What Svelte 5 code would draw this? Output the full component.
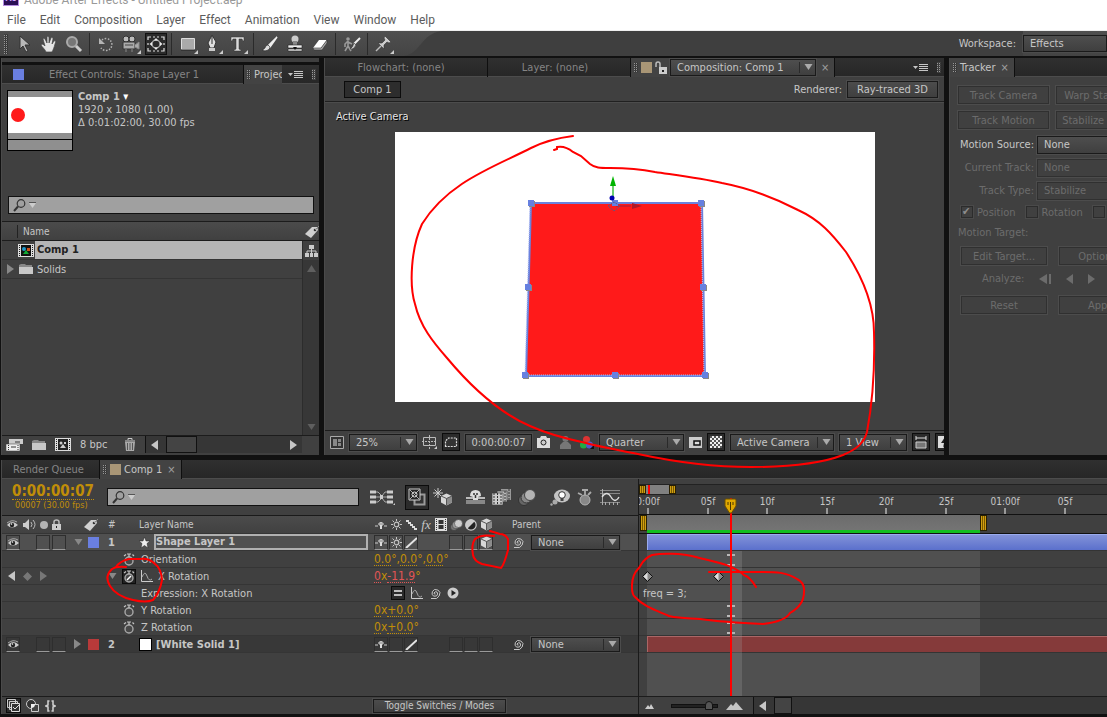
<script>
  let projectSearch = $state('');
  let layerSearch = $state('');
  let zoom = $state(90);

  const menus = ['File', 'Edit', 'Composition', 'Layer', 'Effect', 'Animation', 'View', 'Window', 'Help'];

  const tools = [
    ['select', 'hand', 'zoom'],
    ['rotate', 'camera', 'pan'],
    ['rect', 'pen', 'type'],
    ['brush', 'stamp', 'eraser'],
    ['roto'],
    ['pin']
  ];
  const withFlyout = ['camera', 'rect', 'pen', 'type', 'pin'];

  // pixels per frame in the timeline ruler, and where frame 0 sits
  const origin = 8;
  const frame = 11.9;
  const ticks = [
    { at: 0, text: '0:00f' },
    { at: 5, text: '05f' },
    { at: 10, text: '10f' },
    { at: 15, text: '15f' },
    { at: 20, text: '20f' },
    { at: 25, text: '25f' },
    { at: 30, text: '01:00f' },
    { at: 35, text: '05f' }
  ];
  const x = (f) => Math.round(origin + f * frame);

  const rows = [
    { kind: 'layer', num: 1, name: 'Shape Layer 1', color: 'blue', open: true, selected: true, threeD: true },
    { kind: 'prop', name: 'Orientation', watch: true, values: ['0.0', '°,', '0.0', '°,', '0.0', '°'], track: 'beam' },
    { kind: 'prop', name: 'X Rotation', watch: true, keyed: true, values: ['0', 'x', '-11.9', '°'], track: 'keys' },
    { kind: 'prop', name: 'Expression: X Rotation', expression: true, track: 'text' },
    { kind: 'prop', name: 'Y Rotation', watch: true, values: ['0', 'x', '+0.0', '°'], track: 'beam' },
    { kind: 'prop', name: 'Z Rotation', watch: true, values: ['0', 'x', '+0.0', '°'], track: 'beam' },
    { kind: 'layer', num: 2, name: '[White Solid 1]', color: 'red' }
  ];

  const C = 'currentColor';
  const cube = `<path d="M6.500 0.500L12 3v6.500L6.500 12.500L1 9.500V3z" fill="#d8d8d8"/><path d="M6.500 5.500L12 3v6.500L6.500 12.500z" fill="#8c8c8c"/><path d="M1 3l5.500 2.500v7M6.500 5.500L12 3" stroke="#555" fill="none"/>`;
  const watch = `<circle cx="6" cy="8" r="4" fill="#484848" stroke="#a8a8a8" stroke-width="1.400"/><path d="M6 4V1M4 1h4M1 3l2-1.500M11 3L9.500 1.500" stroke="${C}" stroke-width="1.200"/>`;

  // [width, height, markup]
  const icons = {
    select: [18, 18, `<path d="M5 1v13l3-3 3 6 2-1-3-6h5z" fill="#b8b8b8" stroke="#333"/>`],
    hand: [18, 18, `<path d="M6 17c-1-3-4-5-5-7 1-2 3 0 4 1L3 4c1-2 2 0 3 2l1 2L7 2c1-2 2 0 2 1v5l2-5c1-2 2 0 2 1l-1 5 2-3c2-1 2 1 1 3-1 4-2 6-3 8z" fill="#e4e4e4" stroke="#444" stroke-width=".7"/>`],
    zoom: [18, 18, `<circle cx="7" cy="7" r="5" fill="#777" stroke="#aaa" stroke-width="2"/><path d="M11 11l5 5" stroke="#ccc" stroke-width="3"/>`],
    rotate: [18, 18, `<path d="M5 5a6 6 0 1 1-1 8" fill="none" stroke="#b4b4b4" stroke-width="1.500" stroke-dasharray="1.500 1.500"/><path d="M2 3v6h6z" fill="#b4b4b4"/>`],
    camera: [18, 18, `<circle cx="4" cy="4" r="3" fill="#bbb" stroke="#333"/><circle cx="10" cy="4" r="3" fill="#bbb" stroke="#333"/><path d="M1 7h12v7H1z" fill="#aaa" stroke="#333"/><path d="M13 10l4-3v7l-4-2M4 14v3M10 14v3" fill="#aaa" stroke="#888"/><path d="M3 10h8" stroke="#444"/>`],
    pan: [20, 18, `<path d="M2 5V2h3M15 2h3v3M18 13v3h-3M5 16H2v-3M7 2h2M11 2h2M7 16h2M11 16h2M2 8v2M18 8v2" fill="none" stroke="#ddd" stroke-width="1.200"/><circle cx="10" cy="9" r="4" fill="none" stroke="#aaa" stroke-width="1.500"/><path d="M10 3l2 2.500H8zM10 15l2-2.500H8zM3.500 9l2.500-2v4zM16.500 9L14 7v4z" fill="#eee"/>`],
    rect: [18, 18, `<path d="M2.500 3.500h13v11h-13z" fill="#aaa" stroke="#ddd"/><path d="M2 15h14" stroke="#222"/>`],
    pen: [18, 18, `<path d="M8 0l4 7-2 6H6L4 8z" fill="#e0e0e0" stroke="#333"/><path d="M8 1v8" stroke="#333"/><path d="M5 13h6v3H5z" fill="#ccc"/>`],
    type: [18, 18, `<path d="M2 2h13v4h-1l-1-2h-3v10l2 1v1H5v-1l2-1V4H4L3 6H2z" fill="#dadada" stroke="#333" stroke-width=".5"/>`],
    brush: [18, 18, `<path d="M16 2L8 10l1 2z" fill="#eee" stroke="#eee" stroke-width="1.500"/><path d="M7 10c-3 0-2 4-6 5 3 2 8 0 8-3z" fill="#ddd" stroke="#222" stroke-width=".6"/>`],
    stamp: [18, 18, `<circle cx="9" cy="4" r="3.500" fill="#ccc"/><path d="M7 6h4v5H7z" fill="#888"/><path d="M2 10h14v3H2zM2 14h14v2H2z" fill="#eee" stroke="#222" stroke-width=".6"/><path d="M7 12h4l-2 3z" fill="#111"/>`],
    eraser: [18, 18, `<path d="M2 13L8 5h8l-6 8z" fill="#fff"/><path d="M2 13h8l6-8v3l-5 7H3z" fill="#aaa" stroke="#333" stroke-width=".6"/>`],
    roto: [20, 18, `<circle cx="6" cy="4" r="1.800" fill="#999"/><path d="M6 6L3 9v3M6 6v5l-3 5M6 11l3 5M6 7l4 2" fill="none" stroke="#999" stroke-width="1.600"/><path d="M18 3l-6 6" stroke="#eee" stroke-width="2"/><path d="M12 8l2 2q-2 5-6 4 3-2 4-6z" fill="#ccc" stroke="#222" stroke-width=".5"/>`],
    pin: [18, 18, `<path d="M10 1l6 6-2 1-2-1-3 3v4L3 8h4l3-3-1-2z" fill="#ccc" stroke="#333" stroke-width=".6"/><path d="M6 11l-5 5" stroke="#bbb" stroke-width="1.500"/>`],
    menu: [15, 9, `<path d="M0 3h5L2.500 6z" fill="${C}"/><path d="M6 1.500h9M6 3.500h9M6 5.500h9M6 7.500h9" stroke="${C}"/>`],
    search: [23, 13, `<circle cx="8" cy="4.500" r="3.800" fill="none" stroke="#333" stroke-width="1.200"/><path d="M5 7.500L1 12" stroke="#333" stroke-width="2"/><path d="M16 4h7l-3.500 5z" fill="#ccc"/><path d="M16 3.500h7" stroke="#555"/>`],
    tag: [15, 13, `<path d="M1 9l7-7h5l1 3-7 8z" fill="#d0d0d0"/><circle cx="11" cy="5" r="1.300" fill="#333"/><path d="M11 5l4-4" stroke="#888"/>`],
    comp: [16, 13, `<path d="M0 0h16v13H0z" fill="#ddd"/><path d="M3 1h10v11H3z" fill="#111"/><circle cx="6" cy="5" r="2" fill="#29c"/><path d="M9 4h3v3H9z" fill="#c52"/><path d="M5 10l3-4 3 4z" fill="#1a3"/><path d="M1.500 1v11M14.500 1v11" stroke="#222" stroke-dasharray="1 1"/>`],
    compGray: [16, 13, `<path d="M0 0h16v13H0z" fill="#ddd"/><path d="M3 1h10v11H3z" fill="#222"/><circle cx="6" cy="5" r="1.500" fill="#ccc"/><path d="M9 4h2v2H9zM5 10l3-4 3 4z" fill="#ccc"/><path d="M1.500 1v11M14.500 1v11" stroke="#222" stroke-dasharray="1 1"/>`],
    folder: [14, 12, `<path d="M0 4V2l2-1h4l1 1h6v2z" fill="#888"/><path d="M0 4h14v7H0z" fill="#c8c8c8"/>`],
    flow: [13, 12, `<path d="M4 0h5v4H4zM0 8h4v4H0zM5 8h3v4H5zM9 8h4v4H9z" fill="#ccc"/><path d="M6.500 4v4M2 8V6h9v2" fill="none" stroke="#ccc"/>`],
    interpret: [17, 12, `<path d="M3 0h14v5H3z" fill="#ccc"/><path d="M0 5h14v7H0z" fill="#eee" stroke="#333" stroke-width=".5"/><path d="M9 3h5M5 8h5" stroke="#333"/><path d="M2.500 6v6M12 6v6" stroke="#333" stroke-dasharray="1 1"/>`],
    trash: [12, 13, `<path d="M1 3h10M4 2V.5h4V2" stroke="#ccc" fill="none"/><path d="M1 4h10l-1 9H2z" fill="#aaa"/><path d="M3.500 5v7M6 5v7M8.500 5v7" stroke="#555"/>`],
    left: [7, 10, `<path d="M7 0v10L0 5z" fill="${C}"/>`],
    right: [7, 10, `<path d="M0 0v10l7-5z" fill="${C}"/>`],
    up: [9, 7, `<path d="M0 7h9L4.500 0z" fill="${C}"/>`],
    down: [9, 6, `<path d="M0.500 0h8L4.500 6z" fill="${C}"/>`],
    stepBack: [12, 10, `<path d="M8 0v10L0 5zM10 0h2v10h-2z" fill="${C}"/>`],
    diamond: [9, 9, `<path d="M4.500 0L9 4.500 4.500 9 0 4.500z" fill="${C}"/>`],
    unlock: [12, 13, `<path d="M1 6V3q0-2 2-2t2 2v4" fill="none" stroke="#bbb" stroke-width="1.500"/><path d="M4 6h8v7H4z" fill="#ccc"/><path d="M7 9h2v2H7z" fill="#222"/>`],
    lock: [9, 11, `<path d="M2 5V3q0-2 2.500-2T7 3v2" fill="none" stroke="#bbb" stroke-width="1.500"/><path d="M0 5h9v6H0z" fill="#ccc"/><path d="M4 7h1v2H4z" fill="#222"/>`],
    eye: [13, 9, `<path d="M1 5q5-6 11 0-6 5-11 0z" fill="#ccc"/><circle cx="6" cy="5" r="2.200" fill="#222"/><circle cx="5.500" cy="4" r=".8" fill="#fff"/><path d="M1 3q5-4 10-1" fill="none" stroke="#aaa"/>`],
    speaker: [13, 11, `<path d="M0 4h2l4-4v11L2 8H0z" fill="#ccc"/><path d="M8 3q2 2.500 0 5M10 1q4 4.500 0 9" fill="none" stroke="#bbb"/>`],
    dot: [8, 8, `<circle cx="4" cy="4" r="4" fill="#b4b4b4"/>`],
    star: [11, 11, `<path d="M5.500 0l1.500 4h4L8 6.500 9 11 5.500 8.500 2 11l1-4.500L0 4h4z" fill="#eee" stroke="#222" stroke-width=".5"/>`],
    watch: [12, 13, watch],
    watchOn: [12, 13, watch + `<path d="M4 10l4-4" stroke="#fff" stroke-width="1.500"/>`],
    graph: [12, 12, `<path d="M.5 0v11.500H12" fill="none" stroke="#ccc"/><path d="M1 7q3-7 5-1t5 3" fill="none" stroke="#aaa"/>`],
    spiral: [12, 11, `<path d="M6.500 6Q5 6.500 5 5q1-2 3-1 1.500 2-.5 4-3 1-4.500-1.500-.5-3.500 2.500-5 4-.5 5.500 3 0 4-3.500 6H2" fill="none" stroke="${C}"/>`],
    play: [12, 12, `<circle cx="6" cy="6" r="5.500" fill="#ccc"/><path d="M4.500 3v6L9 6z" fill="#222"/>`],
    equals: [8, 6, `<path d="M0 1h8M0 5h8" stroke="#eee" stroke-width="1.500"/>`],
    shy: [12, 8, `<path d="M0 5h3M9 5h3" stroke="#ccc"/><path d="M3 3q3-4 6 0L7 5v3H5V5z" fill="#ddd"/><path d="M4.500 3h1M6.500 3h1" stroke="#222"/>`],
    sun: [11, 11, `<circle cx="5.500" cy="5.500" r="2.300" fill="none" stroke="${C}" stroke-width="1.200"/><path d="M5.500 0v2M5.500 9v2M0 5.500h2M9 5.500h2M1.500 1.500L3 3M8 8l1.500 1.500M1.500 9.500L3 8M8 3l1.500-1.500" stroke="${C}"/>`],
    steps: [11, 10, `<path d="M0 1h3M2 3h3M4 5h3M6 7h3M8 9h3" fill="none" stroke="#ddd" stroke-width="2"/>`],
    slash: [12, 11, `<path d="M1 11L12 1" stroke="#e4e4e4" stroke-width="2"/>`],
    film: [12, 13, `<path d="M0 0h12v13H0z" fill="#ddd"/><path d="M3.500 2h5v4h-5zM3.500 7h5v4h-5z" fill="#333"/><path d="M1.500 1v12M10.500 1v12" stroke="#333" stroke-dasharray="1 1"/>`],
    blur: [13, 12, `<circle cx="4" cy="8" r="3.500" fill="#777" stroke="#333" stroke-width=".5"/><circle cx="6" cy="6" r="3.800" fill="#999" stroke="#333" stroke-width=".5"/><circle cx="8.500" cy="4.500" r="4" fill="#ccc" stroke="#333" stroke-width=".5"/>`],
    adjust: [12, 12, `<circle cx="6" cy="6" r="5.200" fill="#222" stroke="#ccc" stroke-width="1.200"/><path d="M2 10L10 2A5.500 5.500 0 0 0 2 10z" fill="#ccc"/>`],
    cube: [13, 13, cube],
    mini: [25, 16, `<path d="M0 3h6M0 8h6M0 13h6M17 3h6M17 8h6M17 13h6" stroke="#ccc" stroke-width="3"/><path d="M6 3h2l4 4M6 13h2l4-4M17 3h-2l-3 4M17 13h-2l-3-4M6 8h11" fill="none" stroke="#aaa"/><path d="M10 6h3v4h-3z" fill="#ccc"/><path d="M23 16h2v-2z" fill="#ccc"/>`],
    live: [18, 18, `<path d="M6.500 6.500h10v10h-10z" fill="#333" stroke="#999" stroke-width="2"/><path d="M1 1h11v11H1z" fill="#222" stroke="#ccc"/><path d="M2 2l9 9M11 2l-9 9" stroke="#aaa"/><circle cx="6.500" cy="6.500" r="2.500" fill="none" stroke="#ddd"/>`],
    draft: [20, 18, `<path d="M5 0v10M0 5h10M1.500 1.500l7 7M8.500 1.500l-7 7" stroke="#ccc"/><g transform="translate(7 5)">${cube}</g>`],
    shyAll: [19, 16, `<path d="M0 8h19v2H0z" fill="#bbb"/><path d="M0 11h19v4H0z" fill="#888"/><path d="M4 7q0-6 5.500-6T15 7l-3 1v3H7V8z" fill="#ddd"/><path d="M7 5h2M10 5h2M9.500 6v3" stroke="#333" stroke-width="1.500"/>`],
    blend: [19, 16, `<path d="M9 0h10v11H9z" fill="#999"/><path d="M5 2h10v11H5z" fill="#bbb" stroke="#333" stroke-width=".6"/><path d="M0 4h11v12H0z" fill="#ccc" stroke="#333" stroke-width=".6"/><path d="M2 4v12M5.500 4v12M9 4v12M13 2v11M17 0v11" stroke="#333" stroke-dasharray="2 1"/>`],
    motion: [18, 17, `<circle cx="6" cy="11" r="5.500" fill="#666" stroke="#333"/><circle cx="8.500" cy="8.500" r="5.500" fill="#888" stroke="#333"/><circle cx="12" cy="6" r="5.500" fill="#b4b4b4" stroke="#444"/>`],
    brain: [20, 17, `<ellipse cx="12" cy="7" rx="8" ry="6.500" fill="#c4c4c4"/><circle cx="5" cy="13" r="2.500" fill="#aaa"/><circle cx="1.500" cy="15.500" r="1.200" fill="#aaa"/><circle cx="12" cy="6" r="3.300" fill="#fff" stroke="#333"/><path d="M10.500 9h3v3h-3z" fill="#444"/>`],
    auto: [16, 17, `<circle cx="8" cy="11" r="5" fill="#888" stroke="#b4b4b4"/><path d="M8 6V1M5 1h6M1 4l4 2M14 3l-3 3" stroke="#aaa" stroke-width="1.800"/>`],
    curve: [20, 16, `<path d="M0 1.500h20M0 4.500h20M0 13.500h20" stroke="#888"/><path d="M2.500 0v16M5.500 13v3M9.500 13v3M13.500 13v3M17.500 13v3" stroke="#aaa"/><path d="M2 8q5-7 9 0t8 0" fill="none" stroke="#ddd" stroke-width="1.300"/>`],
    preview: [14, 13, `<path d="M.5.5h13v12H.5z" fill="#333" stroke="#aaa"/><path d="M3 3h4v7H3zM8 3h3v3H8zM8 7h3v3H8z" fill="#888"/>`],
    guides: [15, 14, `<path d="M1.500 2.500h12v8h-12z" fill="none" stroke="#bbb"/><path d="M7.500 0v14M0 6.500h15" stroke="#bbb" stroke-dasharray="2 1"/><path d="M12 14h3v-3z" fill="#ccc"/>`],
    mask: [14, 12, `<path d="M1.500 10.500V5l3-3h8v8.500z" fill="#333" stroke="#ddd" stroke-width="1.200" stroke-dasharray="2 1"/>`],
    photo: [13, 12, `<path d="M0 2h3l1-2h5l1 2h3v10H0z" fill="#ddd"/><circle cx="6.500" cy="6.500" r="2.500" fill="#ccc" stroke="#222"/>`],
    person: [11, 13, `<circle cx="5.500" cy="3" r="3" fill="#777"/><path d="M0 13V9l3-3h5l3 3v4z" fill="#777"/>`],
    rgb: [14, 13, `<circle cx="6.500" cy="3.500" r="3.500" fill="#d33"/><circle cx="3.500" cy="9" r="3.500" fill="#2a4"/><circle cx="9.500" cy="9" r="3.500" fill="#55c"/><path d="M10 13h4V9z" fill="#111"/>`],
    roi: [13, 11, `<path d="M0 0h13v11H0z" fill="#ccc"/><path d="M5 4h6v4H5z" fill="#ddd" stroke="#111" stroke-width="1.500"/>`],
    checker: [12, 12, `<path d="M0 0h12v12H0z" fill="#eee"/><path d="M0 1h12M0 5h12M0 9h12" stroke="#555" stroke-width="2" stroke-dasharray="2 2"/><path d="M2 3h10M2 7h10M2 11h10" stroke="#555" stroke-width="2" stroke-dasharray="2 2"/>`],
    aspect: [12, 13, `<path d="M1 2h10M1 0v4M11 0v4" stroke="#ddd" fill="none"/><path d="M1 6h10v6H1z" fill="#777" stroke="#ccc"/>`],
    flash: [12, 12, `<path d="M0 0h12v12H0z" fill="#ddd"/><path d="M7 1L3 7h3l-1 5 4-7H6z" fill="#222"/>`],
    stack: [13, 13, `<path d="M.5.5h8v8h-8zM2.500 2.500h8v8h-8z" fill="#333" stroke="#ccc"/><path d="M4.500 4.500h8v8h-8z" fill="#333" stroke="#ddd"/><path d="M6 8l2 2 4-4" fill="none" stroke="#ddd"/>`],
    modes: [14, 13, `<circle cx="5" cy="5" r="4.500" fill="#333" stroke="#ccc"/><path d="M5.500 5.500h7v7h-7z" fill="#444" stroke="#ccc"/><path d="M5 9V5h4a4 4 0 0 1-4 4z" fill="#eee"/>`],
    braces: [11, 12, `<path d="M4.500 1H3v4L1 6l2 1v4h1.500M6.500 1H8v4l2 1-2 1v4H6.500" fill="none" stroke="#ccc" stroke-width="1.600"/>`],
    hills: [9, 6, `<path d="M0 6l3-4 1.500 2L6 1l3 5z" fill="#ccc"/>`],
    mountains: [17, 8, `<path d="M0 8l5-6 2 2 3-4 7 8z" fill="#c4c4c4"/>`]
  };

  const headTools = ['shyAll', 'blend', 'motion', 'brain', 'auto', 'curve'];
  const switchHeads = ['shy', 'sun', 'steps', 'fx', 'film', 'blur', 'adjust', 'cube'];

  function cells(row) {
    return ['shy', row.selected ? 'sun' : '', 'slash', null, null, '', '', row.threeD ? 'cube' : ''];
  }
</script>

{#snippet icon(name)}
  <svg class="icon" width={icons[name][0]} height={icons[name][1]} viewBox="0 0 {icons[name][0]} {icons[name][1]}" aria-hidden="true">{@html icons[name][2]}</svg>
{/snippet}

{#snippet pick(label, value, cls)}
  <span class="pick {cls}">
    <select aria-label={label}><option>{value}</option></select>
    <span class="pick-arrow">{@render icon('down')}</span>
  </span>
{/snippet}

<div class="app">
  <header>
    <div class="titlebar">
      <span class="logo">Ae</span>
      <span>Adobe After Effects - Untitled Project.aep</span>
    </div>
    <nav>
      {#each menus as menu}
        <button>{menu}</button>
      {/each}
    </nav>
  </header>

  <div class="toolbar">
    <span class="grip"></span>
    {#each tools as group}
      <div class="tool-group">
        {#each group as tool}
          <button class="tool" class:active={tool === 'pan'} class:flyout={withFlyout.includes(tool)} aria-label={tool}>
            {@render icon(tool)}
          </button>
        {/each}
      </div>
    {/each}
    <svg class="swoosh" viewBox="0 0 60 25" preserveAspectRatio="none" aria-hidden="true">
      <path d="M0 25C18 22 16 3 38 0H60V25z" fill="#3f3f3f" />
    </svg>
    <label class="workspace" for="workspace">Workspace:</label>
    <select id="workspace" class="workspace-select"><option>Effects</option></select>
  </div>

  <main>
    <section class="panel project">
      <div class="strip"></div>
      <div class="tabs">
        <button class="tab effect"><i class="chip blue"></i>Effect Controls: Shape Layer 1</button>
        <button class="tab on proj"><i class="grip small"></i>Project</button>
        <span class="tab-tools">{@render icon('menu')}</span>
        <i class="grip small"></i>
      </div>

      <div class="info">
        <div class="thumb"><div class="thumb-frame"><i></i></div></div>
        <div>
          <b>Comp 1 <span class="tri">▾</span></b>
          <p>1920 x 1080 (1.00)</p>
          <p>Δ 0:01:02:00, 30.00 fps</p>
        </div>
      </div>

      <label class="search">
        {@render icon('search')}
        <input bind:value={projectSearch} aria-label="Search project" />
      </label>

      <div class="list-head"><span>Name</span>{@render icon('tag')}</div>
      <div class="list">
        <ul>
          <li class="picked"><span class="item-icon">{@render icon('comp')}</span><b>Comp 1</b></li>
          <li><span class="twirl">{@render icon('right')}</span>{@render icon('folder')}<span class="item-name">Solids</span></li>
        </ul>
        <div class="vscroll">
          <span class="flow">{@render icon('flow')}</span>
          {@render icon('up')}
          <span class="trough"></span>
          {@render icon('down')}
        </div>
      </div>

      <div class="panel-foot">
        <button aria-label="Interpret footage">{@render icon('interpret')}</button>
        <button aria-label="New folder">{@render icon('folder')}</button>
        <button aria-label="New composition">{@render icon('compGray')}</button>
        <button>8 bpc</button>
        <button class="bin" aria-label="Delete">{@render icon('trash')}</button>
        <div class="hscroll">{@render icon('left')}<span class="thumb-bar"></span><span class="trough"></span>{@render icon('right')}</div>
      </div>
    </section>

    <section class="panel viewer">
      <div class="tabs">
        <button class="tab flowchart">Flowchart: (none)</button>
        <button class="tab layer-tab">Layer: (none)</button>
        <div class="tab on comp-tab">
          <i class="grip small"></i><i class="chip tan"></i>{@render icon('unlock')}
          {@render pick('Composition', 'Composition: Comp 1', 'comp-pick')}
          <button class="close" aria-label="Close">×</button>
        </div>
        <span class="tab-tools">{@render icon('menu')}</span>
        <i class="grip small"></i>
      </div>

      <div class="viewer-bar">
        <button class="crumb">Comp 1</button>
        <span class="renderer">Renderer:</span>
        <button class="btn ray">Ray-traced 3D</button>
      </div>

      <div class="stage">
        <span class="camera-name">Active Camera</span>
        <svg class="canvas" width="480" height="270" viewBox="0 0 480 270" aria-hidden="true">
          <rect width="480" height="270" fill="#fff" />
          <path d="M136 71H307L310 244H131z" fill="#ff1a1a" stroke="#6b82dd" stroke-width="2" />
          <path d="M135 71L130 243H309L306 72" fill="none" stroke="#b9c5f5" stroke-dasharray="1 1" />
          {#each [[137, 72], [307, 72], [134, 156], [309, 156], [131, 244], [221, 244], [311, 244]] as [hx, hy]}
            <rect x={hx - 3} y={hy - 3} width="6" height="6" fill="#888" />
            <rect x={hx - 4} y={hy - 4} width="6" height="6" fill="#6680e0" />
          {/each}
          <path d="M221 74h15" stroke="#a02040" />
          <path d="M237 71l10 3-10 3z" fill="#b01828" />
          <path d="M218 66V50" stroke="#6fd06f" stroke-width="2" />
          <path d="M218 44l3 10h-6z" fill="#00b400" />
          <rect x="217" y="68" width="6" height="6" fill="#6680e0" />
          <path d="M213 74l6-4 6 4-6 5z" fill="none" stroke="#555b88" stroke-dasharray="2 1" />
          <circle cx="217" cy="66" r="2.500" fill="#0000b0" />
        </svg>
      </div>

      <div class="viewer-foot">
        <button aria-label="Always preview">{@render icon('preview')}</button>
        {@render pick('Magnification', '25%', 'w-zoom')}
        <button aria-label="Guides">{@render icon('guides')}</button>
        <button class="boxed" aria-label="Mask visibility">{@render icon('mask')}</button>
        <button class="btn timecode">0:00:00:07</button>
        <button aria-label="Snapshot">{@render icon('photo')}</button>
        <button class="wide" aria-label="Show snapshot">{@render icon('person')}</button>
        <button aria-label="Channels">{@render icon('rgb')}</button>
        {@render pick('Resolution', 'Quarter', 'w-res')}
        <button aria-label="Region of interest">{@render icon('roi')}</button>
        <button class="boxed" aria-label="Transparency grid">{@render icon('checker')}</button>
        {@render pick('3D view', 'Active Camera', 'w-cam')}
        {@render pick('View layout', '1 View', 'w-view')}
        <button class="boxed" aria-label="Pixel aspect">{@render icon('aspect')}</button>
        <button class="boxed" aria-label="Fast previews">{@render icon('flash')}</button>
      </div>
    </section>

    <section class="panel tracker">
      <div class="tabs">
        <div class="tab on tracker-tab"><i class="grip small"></i>Tracker <button class="close" aria-label="Close">×</button></div>
      </div>
      <div class="tracker-body">
        <div class="pairs">
          <button class="btn" disabled>Track Camera</button>
          <button class="btn" disabled>Warp Stabilizer</button>
          <button class="btn" disabled>Track Motion</button>
          <button class="btn" disabled>Stabilize Motion</button>
        </div>
        <div class="field"><label for="source">Motion Source:</label><select id="source"><option>None</option></select></div>
        <div class="field"><label class="dim" for="track">Current Track:</label><select id="track" disabled><option>None</option></select></div>
        <div class="field"><label class="dim" for="type">Track Type:</label><select id="type" disabled><option>Stabilize</option></select></div>
        <div class="checks">
          <label><input type="checkbox" checked disabled />Position</label>
          <label><input type="checkbox" disabled />Rotation</label>
          <label><input type="checkbox" disabled />Scale</label>
        </div>
        <p class="dim target">Motion Target:</p>
        <div class="pair">
          <button class="btn" disabled>Edit Target...</button>
          <button class="btn" disabled>Options...</button>
        </div>
        <div class="analyze dim">
          <span>Analyze:</span>
          <button aria-label="Step back" disabled>{@render icon('stepBack')}</button>
          <button aria-label="Backward" disabled>{@render icon('left')}</button>
          <button aria-label="Forward" disabled>{@render icon('right')}</button>
        </div>
        <div class="pair">
          <button class="btn" disabled>Reset</button>
          <button class="btn" disabled>Apply</button>
        </div>
      </div>
    </section>
  </main>

  <section class="panel timeline">
    <div class="tabs">
      <button class="tab queue">Render Queue</button>
      <div class="tab on time-tab"><i class="grip small"></i><i class="chip tan"></i>Comp 1 <button class="close" aria-label="Close">×</button></div>
    </div>

    <div class="split">
      <div class="layers">
        <div class="controls">
          <div class="clock">
            <button class="now">0:00:00:07</button>
            <span>00007 (30.00 fps)</span>
          </div>
          <label class="search">
            {@render icon('search')}
            <input bind:value={layerSearch} aria-label="Search layers" />
          </label>
          <button class="flowmini" aria-label="Mini flowchart">{@render icon('mini')}</button>
          <button class="boxed big" aria-label="Live update">{@render icon('live')}</button>
          <button class="draft" aria-label="Draft 3D">{@render icon('draft')}</button>
          {#each headTools as tool}
            <button class="head-tool" class:last={tool === 'motion'} aria-label={tool}>{@render icon(tool)}</button>
          {/each}
        </div>

        <div class="row head">
          <div class="av">{@render icon('eye')}{@render icon('speaker')}{@render icon('dot')}{@render icon('lock')}</div>
          <div class="tagcell">{@render icon('tag')}</div>
          <div class="num">#</div>
          <div class="name">Layer Name</div>
          <div class="switches">
            {#each switchHeads as name}
              <span class="cell bare">{#if name === 'fx'}<i class="fx">fx</i>{:else}{@render icon(name)}{/if}</span>
            {/each}
          </div>
          <div class="parent">Parent</div>
        </div>

        {#each rows as row}
          {#if row.kind === 'layer'}
            <div class="row layer" class:selected={row.selected}>
              <div class="av">
                <span class="cell">{@render icon('eye')}</span>
                <span class="cell solo"></span>
                <span class="cell"></span>
              </div>
              <div class="tagcell"><span class="twist">{@render icon(row.open ? 'down' : 'right')}</span><i class="chip {row.color}"></i></div>
              <div class="num">{row.num}</div>
              <div class="name">
                {#if row.selected}
                  {@render icon('star')}<b class="name-box">{row.name}</b>
                {:else}
                  <i class="chip white"></i><b>{row.name}</b>
                {/if}
              </div>
              <div class="switches">
                {#each cells(row) as cell}
                  <span class="cell" class:bare={cell === null}>{#if cell}{@render icon(cell)}{/if}</span>
                {/each}
              </div>
              <div class="parent">
                {@render icon('spiral')}
                {@render pick('Parent', 'None', 'w-parent')}
              </div>
            </div>
          {:else}
            <div class="row prop">
              <div class="av keynav">
                {#if row.keyed}{@render icon('left')}<span class="faint">{@render icon('diamond')}</span><span class="faint">{@render icon('right')}</span>{/if}
              </div>
              <div class="prop-name">
                <span class="twist">{#if row.keyed}{@render icon('down')}{/if}</span>
                <span class="watch" class:keyed={row.keyed}>
                  {#if row.watch}{@render icon(row.keyed ? 'watchOn' : 'watch')}{/if}
                </span>
                {#if row.keyed}{@render icon('graph')}{/if}
                <span>{row.name}</span>
              </div>
              {#if row.expression}
                <div class="expr">
                  <span class="boxed">{@render icon('equals')}</span>
                  {@render icon('graph')}{@render icon('spiral')}{@render icon('play')}
                </div>
              {:else}
                <div class="values" class:driven={row.keyed}>
                  {#each row.values as v, i}{#if i % 2}<span>{v}</span>{:else}<button>{v}</button>{/if}{/each}
                </div>
              {/if}
            </div>
          {/if}
        {/each}
        <div class="rest"></div>
        <div class="foot">
          <button class="boxed" aria-label="Layer switches">{@render icon('stack')}</button>
          <button aria-label="Transfer controls">{@render icon('modes')}</button>
          <button aria-label="In and out">{@render icon('braces')}</button>
          <button class="btn toggle">Toggle Switches / Modes</button>
        </div>
      </div>

      <div class="tracks">
        <div class="ruler">
          <div class="navigator"><i class="gold"></i><span></span><i class="gold"></i></div>
          {#each ticks as tick}
            <span class="tick" style="left: {x(tick.at)}px"><em>{tick.text}</em></span>
          {/each}
        </div>
        <div class="workarea"><i class="gold"></i><span></span><i class="gold"></i></div>
        <div class="lanes">
          {#each rows as row}
            <div class="lane">
              {#if row.kind === 'layer'}
                <div class="bar {row.color}"></div>
              {:else if row.track === 'keys'}
                {#each [0, 6] as key}
                  <svg class="key" style="left: {x(key) - 5}px" width="11" height="11" viewBox="0 0 11 11" aria-hidden="true">
                    <path d="M5.500 .5L10.500 5.500L5.500 10.500L.5 5.500z" fill="#888" stroke="#111" />
                    <path d="M5.500 1.500L1.500 5.500L5.500 9.500z" fill="#ddd" />
                  </svg>
                {/each}
              {:else if row.track === 'text'}
                <span class="code">freq = 3;</span>
              {:else}
                <svg class="beam" style="left: {x(7) - 3}px" width="8" height="12" viewBox="0 0 8 12" aria-hidden="true">
                  <path d="M0 1h3M5 1h3M0 11h3M5 11h3M4 2v8" stroke="#ddd" stroke-width="1.500" />
                </svg>
              {/if}
            </div>
          {/each}
          <div class="rest"></div>
          <div class="frame" style="left: {x(7)}px"></div>
        </div>
        <div class="playhead" style="left: {x(7)}px">
          <svg width="13" height="16" viewBox="0 0 13 16" aria-hidden="true">
            <path d="M1 2q0-1 1-1h9q1 0 1 1v6L7.500 15h-2L1 8z" fill="#e0a800" stroke="#6b4e00" />
            <path d="M4 4v3M6.500 4v8M9 4v3" stroke="#4a3600" />
          </svg>
        </div>
        <div class="foot">
          {@render icon('hills')}
          <input type="range" bind:value={zoom} aria-label="Timeline zoom" />
          {@render icon('mountains')}
          <div class="hscroll">{@render icon('left')}<span class="thumb-bar short"></span><span class="trough"></span></div>
        </div>
      </div>
    </div>
  </section>

  <!-- hand-drawn markup over the workspace -->
  <svg class="markup" width="1107" height="717" viewBox="0 0 1107 717" aria-hidden="true">
    <path d="M573 136C557 138 543 142 531 148C494 167 448 182 422 224C411 248 409 285 415 304C420 326 433 342 447 358C472 388 500 413 530 426C550 435 567 439 586 443C600 447 619 450 638 454C675 462 710 467 751 467C790 467 820 464 843 455C857 449 864 443 867 432C873 400 875 368 874 332C874 302 861 275 846 252C832 234 820 220 798 210C775 198 748 188 722 183C700 178 675 175 655 172C640 169 625 168 610 168C600 168 595 168 590 164L581 156L573 152C567 147 562 146 557 147L557 149L554 150" stroke-width="1.700" />
    <path d="M126 567Q116 566 112 569Q104 576 110 586Q116 596 133 600Q146 603 153 600Q160 592 162 580Q161 568 155 564Q149 558 140 559H129Q120 561 116 567" />
    <path d="M494 536Q481 534 475 539Q471 545 473 555Q474 561 482 564L501 568Q504 565 508 550V539Q505 534 500 534L490 531" />
    <path d="M756 587Q750 577 744 575C730 563 713 562 696 557C681 553 662 553 652 555C641 560 642 565 638 569C630 577 631 594 635 597C644 607 658 611 669 616C682 619 692 618 700 619C722 622 742 623 763 624C780 622 787 618 790 613C799 608 804 601 804 592C805 583 799 580 797 579C786 572 776 572 763 572H709" />
  </svg>
</div>

<style>
  :global(body) {
    background: #0e0e0e;
  }

  .app {
    position: relative;
    display: flex;
    flex-direction: column;
    min-height: 100vh;
    overflow: hidden;
    background: #111;
    color: #c6c6c6;
    font: 11px/13px "DejaVu Sans Condensed", "Noto Sans", sans-serif;
  }

  .app :global(*) {
    box-sizing: border-box;
  }

  button,
  select,
  input {
    margin: 0;
    padding: 0;
    border: 0;
    border-radius: 0;
    background: none;
    color: inherit;
    font: inherit;
    white-space: nowrap;
  }

  p {
    margin: 0;
  }

  .icon {
    display: block;
    flex: none;
  }

  /* title and menu */
  header {
    background: #fff;
    color: #5c5c5c;
    font: 12px/20px Roboto, "Open Sans", sans-serif;
  }

  .titlebar {
    display: flex;
    align-items: flex-end;
    gap: 5px;
    height: 10px;
    padding-left: 3px;
    overflow: hidden;
    color: #999;
  }

  .logo {
    height: 16px;
    width: 16px;
    margin-bottom: 4px;
    border: 1px solid #b48be0;
    background: #2b0f55;
    color: #d4a6ff;
    font: bold 9px/14px Roboto, sans-serif;
    text-align: center;
  }

  nav {
    display: flex;
    gap: 14px;
    height: 21px;
    padding-left: 7px;
    border-bottom: 1px solid #eee;
  }

  /* tools */
  .toolbar {
    display: flex;
    align-items: center;
    height: 25px;
    flex: none;
    padding-left: 4px;
    background: linear-gradient(#4f4f4f, #444);
  }

  .grip {
    width: 4px;
    height: 20px;
    flex: none;
    background:
      repeating-linear-gradient(#404040 0 1px, transparent 1px 2px),
      repeating-linear-gradient(90deg, #999 0 1px, #333 1px 2px);
  }

  .grip.small {
    height: 11px;
  }

  .tool-group {
    display: flex;
    padding: 0 3px;
    border-right: 1px solid #2a2a2a;
  }

  .tool-group:last-of-type {
    border: 0;
  }

  .tool {
    position: relative;
    display: grid;
    place-items: center;
    width: 25px;
    height: 22px;
  }

  .tool.active {
    width: 22px;
    margin: 0 1px 0 2px;
    border: 1px solid #111;
    background: #2b2b2b;
  }

  .tool.flyout::after {
    content: "";
    position: absolute;
    right: 2px;
    bottom: 1px;
    border: 2px solid;
    border-color: transparent #ccc #ccc transparent;
  }

  .swoosh {
    width: 60px;
    height: 25px;
    margin-left: 5px;
  }

  .workspace {
    display: flex;
    align-items: center;
    justify-content: flex-end;
    flex: 1;
    height: 25px;
    padding-right: 7px;
    background: #3f3f3f;
  }

  .workspace-select {
    width: 84px;
  }

  select {
    height: 17px;
    padding: 0 6px;
    border: 1px solid #1a1a1a;
    background: linear-gradient(#4e4e4e, #3f3f3f);
    appearance: none;
    outline: 1px solid #4c4c4c;
  }

  select:disabled {
    border-color: #303030;
    background: #404040;
    color: #6c6c6c;
    opacity: 1;
  }

  .pick {
    display: inline-grid;
    flex: none;
  }

  .pick > * {
    grid-area: 1 / 1;
  }

  .pick-arrow {
    display: grid;
    place-items: center;
    justify-self: end;
    align-self: center;
    width: 17px;
    height: 11px;
    border-left: 1px solid #2a2a2a;
    color: #aaa;
    pointer-events: none;
  }

  .btn {
    height: 17px;
    padding: 0 6px;
    border: 1px solid #1a1a1a;
    outline: 1px solid #4c4c4c;
    background: linear-gradient(#4c4c4c, #3f3f3f);
    line-height: 15px;
  }

  .btn:disabled {
    border-color: #303030;
    background: #404040;
    color: #6c6c6c;
  }

  .boxed {
    display: grid;
    place-items: center;
    flex: none;
    border: 1px solid #0c0c0c;
    background: #2b2b2b;
  }

  /* panels */
  main {
    display: grid;
    flex: 1;
    grid-template-columns: 318px minmax(0, 1fr) 158px;
    gap: 5px;
    padding: 2px 0 3px 1px;
  }

  .panel {
    display: flex;
    flex-direction: column;
    min-width: 0;
    overflow: hidden;
    background: #404040;
    border-left: 1px solid #4a4a4a;
  }

  .tabs {
    display: flex;
    align-items: center;
    height: 19px;
    flex: none;
    padding-right: 3px;
    background: linear-gradient(#303030, #272727);
    border-bottom: 1px solid #4c4c4c;
  }

  .tab {
    display: flex;
    align-items: center;
    justify-content: center;
    height: 19px;
    flex: none;
    border-right: 1px solid #0f0f0f;
    color: #858585;
  }

  .tab.on {
    gap: 3px;
    padding: 0 3px;
    background: #434343;
    color: #c6c6c6;
  }

  .tab-tools {
    flex: 1;
    display: flex;
    justify-content: flex-end;
    padding-right: 9px;
  }

  .chip {
    width: 11px;
    height: 11px;
    flex: none;
  }

  .chip.blue {
    background: #6a7fe0;
  }

  .chip.red {
    background: #b83a3a;
  }

  .chip.tan {
    background: #a99676;
  }

  .chip.white {
    width: 13px;
    height: 13px;
    border: 1px solid #000;
    background: #fff;
  }

  .close {
    padding: 0 2px;
    color: #a0a0a0;
  }

  /* project */
  .strip {
    height: 7px;
    flex: none;
    border-bottom: 3px solid #111;
    background: #3f3f3f;
  }

  .effect {
    width: 242px;
    gap: 25px;
    padding-left: 11px;
    justify-content: flex-start;
  }

  .tab.proj {
    width: 38px;
    justify-content: flex-start;
    overflow: hidden;
    border: 0;
  }

  .info {
    display: flex;
    gap: 5px;
    padding: 6px 5px 0;
    height: 112px;
  }

  .tri {
    color: #fff;
  }

  .thumb {
    width: 66px;
    height: 61px;
    flex: none;
    border: 1px solid #000;
    background: #8f8f8f;
    padding-top: 6px;
  }

  .thumb-frame {
    display: flex;
    align-items: center;
    height: 36px;
    padding-left: 3px;
    background: #fff;
    box-shadow: 0 6px #8f8f8f, 0 7px #000;
  }

  .thumb-frame i {
    width: 14px;
    height: 14px;
    border-radius: 50%;
    background: #ff1a1a;
  }

  .search {
    display: flex;
    align-items: center;
    height: 18px;
    border: 1px solid #111;
    background: #a0a0a0;
    padding: 0 4px;
    color: #222;
  }

  .search input {
    flex: 1;
    min-width: 0;
    outline: 0;
  }

  .project .search {
    margin: 0 5px 0 6px;
  }

  .list-head {
    display: flex;
    align-items: center;
    justify-content: space-between;
    height: 20px;
    flex: none;
    margin-top: 7px;
    padding-left: 15px;
    border: solid #1c1c1c;
    border-width: 1px 0;
    background: linear-gradient(#4b4b4b, #404040);
    font-size: 10px;
  }

  .list-head span {
    padding-left: 5px;
    border-left: 1px solid #222;
  }

  .list {
    display: flex;
    flex: 1;
    min-height: 0;
  }

  ul {
    flex: 1;
    margin: 0;
    padding: 0;
    list-style: none;
  }

  li {
    display: flex;
    align-items: center;
    height: 19px;
    border-bottom: 1px solid #343434;
  }

  li b {
    flex: 1;
    line-height: 18px;
    margin-left: 1px;
    padding-left: 2px;
    background: #b5b5b5;
    color: #222;
  }

  .item-icon {
    padding-left: 16px;
  }

  .twirl {
    width: 17px;
    padding-left: 5px;
    color: #888;
  }

  .item-name {
    padding-left: 4px;
  }

  .vscroll {
    display: flex;
    flex-direction: column;
    align-items: center;
    width: 17px;
    padding-bottom: 5px;
    border-left: 1px solid #2c2c2c;
    background: #373737;
    color: #5f5f5f;
  }

  .flow {
    display: grid;
    place-items: center;
    width: 100%;
    height: 19px;
    margin-bottom: 5px;
    background: #404040;
  }

  .trough {
    flex: 1;
  }

  .panel-foot {
    display: flex;
    align-items: center;
    gap: 9px;
    height: 20px;
    flex: none;
    padding: 0 17px 2px 4px;
    border-top: 1px solid #1c1c1c;
  }

  .bin {
    padding-left: 8px;
  }

  .hscroll {
    display: flex;
    align-items: center;
    flex: 1;
    height: 17px;
    padding: 0 5px;
    border-left: 1px solid #111;
    background: #363636;
  }

  .thumb-bar {
    width: 31px;
    height: 17px;
    margin-left: 8px;
    border: 1px solid #111;
    background: #444;
  }

  .thumb-bar.short {
    width: 18px;
  }

  /* composition viewer */
  .flowchart {
    width: 163px;
    padding-right: 10px;
  }

  .layer-tab {
    width: 143px;
    padding-right: 8px;
  }

  .viewer-bar {
    display: flex;
    align-items: center;
    height: 25px;
    flex: none;
    padding: 0 6px 0 19px;
    border-bottom: 1px solid #202020;
  }

  .crumb {
    height: 17px;
    width: 57px;
    border: 1px solid #0c0c0c;
    background: #2d2d2d;
    line-height: 15px;
  }

  .renderer {
    margin-left: auto;
    padding-right: 5px;
  }

  .ray {
    width: 91px;
    padding: 0;
  }

  .comp-pick {
    width: 146px;
  }

  .stage {
    position: relative;
    display: grid;
    flex: 1;
    place-items: center;
    border-top: 1px solid #4c4c4c;
  }

  .camera-name {
    position: absolute;
    top: 7px;
    left: 11px;
    color: #e4e4e4;
    text-shadow: 1px 1px #000;
  }

  .viewer-foot {
    display: flex;
    align-items: center;
    gap: 5px;
    height: 25px;
    flex: none;
    padding: 0 0 2px 5px;
    border-top: 1px solid #1c1c1c;
  }

  .viewer-foot .boxed {
    width: 18px;
    height: 18px;
  }

  .viewer-foot button {
    flex: none;
  }

  .viewer-foot .wide {
    padding: 0 4px 0 5px;
  }

  .timecode {
    width: 67px;
    padding: 0;
  }

  .w-zoom,
  .w-view {
    width: 68px;
  }

  .w-res {
    width: 85px;
  }

  .w-cam {
    width: 104px;
  }

  /* tracker */
  .tracker-body {
    padding: 9px 0 0 8px;
  }

  .pairs {
    display: grid;
    grid-template-columns: 91px 91px;
    gap: 7px;
    margin-bottom: 4px;
  }

  .pairs .btn {
    height: 18px;
    padding: 0;
  }

  .pair {
    display: flex;
    gap: 12px;
    padding-left: 3px;
  }

  .pair .btn {
    width: 86px;
    height: 18px;
    flex: none;
  }

  .field {
    display: flex;
    align-items: center;
    gap: 3px;
    height: 23px;
  }

  .field label {
    width: 76px;
    flex: none;
    text-align: right;
  }

  .field select {
    width: 110px;
    flex: none;
    height: 18px;
  }

  .dim {
    color: #6c6c6c;
  }

  .checks {
    display: flex;
    gap: 10px;
    height: 20px;
    padding-left: 3px;
    color: #6c6c6c;
  }

  .checks label {
    display: flex;
    align-items: center;
    gap: 4px;
  }

  .checks input {
    width: 12px;
    height: 12px;
    border: 1px solid #2c2c2c;
    appearance: none;
    outline: 1px solid #4a4a4a;
  }

  .checks input:checked::before {
    content: "✔";
    display: block;
    color: #8c8c8c;
    line-height: 10px;
  }

  .target {
    height: 25px;
    line-height: 21px;
  }

  .analyze {
    display: flex;
    align-items: center;
    gap: 15px;
    height: 31px;
    padding: 0 0 4px 24px;
  }

  /* timeline */
  .timeline {
    margin: 2px 0 3px 1px;
    flex: none;
  }

  .queue {
    width: 98px;
    padding-right: 4px;
  }

  .split {
    display: grid;
    grid-template-columns: 636px minmax(0, 1fr);
  }

  .controls {
    display: flex;
    align-items: center;
    height: 36px;
    padding-left: 10px;
  }

  .clock {
    width: 95px;
    flex: none;
    color: #c08e08;
    font-size: 9px;
    line-height: 11px;
  }

  .clock span {
    display: block;
    padding-left: 3px;
  }

  .now {
    border-bottom: 1px dotted #c08e08;
    font: bold 15px/16px "DejaVu Sans Condensed", sans-serif;
  }

  .controls .search {
    width: 252px;
    flex: none;
  }

  .flowmini {
    margin: 0 10px 0 11px;
  }

  .boxed.big {
    width: 24px;
    height: 25px;
  }

  .draft {
    margin: 0 13px 0 4px;
  }

  .head-tool {
    margin-right: 7px;
  }

  .head-tool.last {
    margin-right: 14px;
  }

  .row {
    display: grid;
    grid-template-columns: 68px 30px 35px 239px 132px 1fr;
    align-items: center;
    height: 17px;
    border-bottom: 1px solid #353535;
  }

  .row.head {
    height: 19px;
    border-top: 1px solid #1a1a1a;
    background: linear-gradient(#4b4b4b, #414141);
    font-size: 10px;
  }

  .row.selected {
    background: #505050;
  }

  .row.layer:not(.selected) {
    background: #383838;
  }

  .av,
  .tagcell,
  .name,
  .switches,
  .parent,
  .expr,
  .prop-name {
    display: flex;
    align-items: center;
    height: 100%;
  }

  .av {
    gap: 2px;
    padding-left: 4px;
  }

  .head .av {
    gap: 4px;
  }

  .solo {
    margin-left: 14px;
  }

  .cell {
    display: grid;
    place-items: center;
    width: 14px;
    height: 15px;
    flex: none;
    border: 1px solid #2e2e2e;
    border-bottom-color: #999;
  }

  .cell.bare {
    border: 0;
  }

  .tagcell {
    gap: 5px;
    padding-left: 4px;
  }

  .head .tagcell {
    padding-left: 13px;
  }

  .num {
    padding-left: 8px;
    font-weight: bold;
  }

  .head .num {
    font-weight: normal;
  }

  .name {
    gap: 4px;
    padding: 0 6px 0 4px;
  }

  .name-box {
    flex: 1;
    border: 2px solid #b0b0b0;
    line-height: 12px;
  }

  .switches {
    gap: 1px;
  }

  .fx {
    font: italic 13px/12px "Liberation Serif", serif;
  }

  .parent {
    gap: 7px;
    padding-left: 6px;
  }

  .w-parent {
    width: 89px;
  }

  .w-parent select {
    height: 15px;
  }

  .keynav {
    gap: 8px;
    padding-left: 6px;
  }

  .faint {
    color: #777;
  }

  .prop-name {
    grid-column: 2 / span 3;
    gap: 5px;
    padding-left: 38px;
  }

  .twist {
    width: 9px;
    color: #888;
  }

  .watch {
    display: grid;
    place-items: center;
    width: 14px;
  }

  .watch.keyed {
    height: 15px;
    border: 1px solid #0c0c0c;
    background: #222;
  }

  .values {
    color: #c08e08;
    font-size: 12px;
  }

  .values button {
    border-bottom: 1px dotted;
    line-height: 12px;
  }

  .driven button {
    color: #e05555;
  }

  .expr {
    gap: 6px;
    padding-left: 17px;
  }

  .expr .boxed {
    width: 14px;
    height: 14px;
  }

  .rest {
    height: 43px;
  }

  .foot {
    display: flex;
    align-items: center;
    gap: 5px;
    height: 18px;
    border-top: 1px solid #1c1c1c;
    padding-left: 4px;
  }

  .toggle {
    width: 133px;
    height: 14px;
    margin-left: 312px;
    padding: 0;
    line-height: 12px;
    font-size: 10px;
  }

  .tracks {
    position: relative;
    border-left: 1px solid #1a1a1a;
    overflow: hidden;
  }

  .ruler {
    position: relative;
    height: 35px;
    padding-top: 5px;
  }

  .navigator {
    display: flex;
    height: 11px;
    background: #353535;
    border: solid #222;
    border-width: 1px 0;
  }

  .navigator span {
    width: 23px;
    background: linear-gradient(90deg, #808080 2px, #f00 2px, #f00 4px, #808080 4px);
  }

  .gold {
    width: 7px;
    flex: none;
    border: 1px solid #2a2000;
    background: linear-gradient(90deg, #d09e10 1px, #7a5a00 1px 2px, #d09e10 2px 3px, #7a5a00 3px 4px, #d09e10 4px);
  }

  .tick {
    position: absolute;
    bottom: 0;
    display: flex;
    justify-content: center;
    width: 2px;
    height: 19px;
    background: linear-gradient(transparent 13px, #999 13px);
  }

  .tick em {
    flex: none;
    font-style: normal;
    font-size: 10px;
  }

  .workarea {
    display: flex;
    height: 20px;
    padding: 0 0 0 1px;
    border-top: 1px solid #111;
    border-bottom: 1px solid #111;
  }

  .workarea span {
    width: 333px;
    background: linear-gradient(#6c6c6c, #747474 15px, #12be1e 15px);
  }

  .workarea .gold {
    height: 16px;
  }

  .lanes {
    position: relative;
    background: linear-gradient(90deg, #404040 8px, #505050 8px 341px, #404040 341px);
  }

  .lane {
    position: relative;
    height: 17px;
    border-bottom: 1px solid #343434;
  }

  .bar {
    height: 16px;
    margin-left: 8px;
    border: solid #9aabee;
    border-width: 1px 0 0 1px;
  }

  .bar.blue {
    background: linear-gradient(#8292d8, #5b70cc);
  }

  .bar.red {
    border-color: #a66;
    background: #853a3a;
  }

  .key,
  .beam {
    position: absolute;
    top: 3px;
  }

  .code {
    padding-left: 4px;
    line-height: 17px;
  }

  .frame {
    position: absolute;
    top: 17px;
    bottom: 0;
    width: 12px;
    background: rgba(160, 160, 160, 0.25);
  }

  .playhead {
    position: absolute;
    top: 19px;
    bottom: 18px;
    width: 2px;
    background: #f00;
  }

  .playhead svg {
    display: block;
    margin-left: -6px;
  }

  .tracks .foot {
    gap: 10px;
    padding-left: 6px;
  }

  input[type="range"] {
    width: 47px;
    height: 4px;
    margin: 0 -2px 0 7px;
    border: 1px solid #111;
    background: #222;
    appearance: none;
  }

  input[type="range"]::-webkit-slider-thumb {
    width: 8px;
    height: 9px;
    border: 1px solid #111;
    border-radius: 4px 4px 0 0;
    background: #555;
    appearance: none;
  }

  .markup {
    position: absolute;
    top: 0;
    left: 0;
    pointer-events: none;
  }

  .markup path {
    fill: none;
    stroke: #f00;
    stroke-width: 2;
    stroke-linecap: round;
  }
</style>
